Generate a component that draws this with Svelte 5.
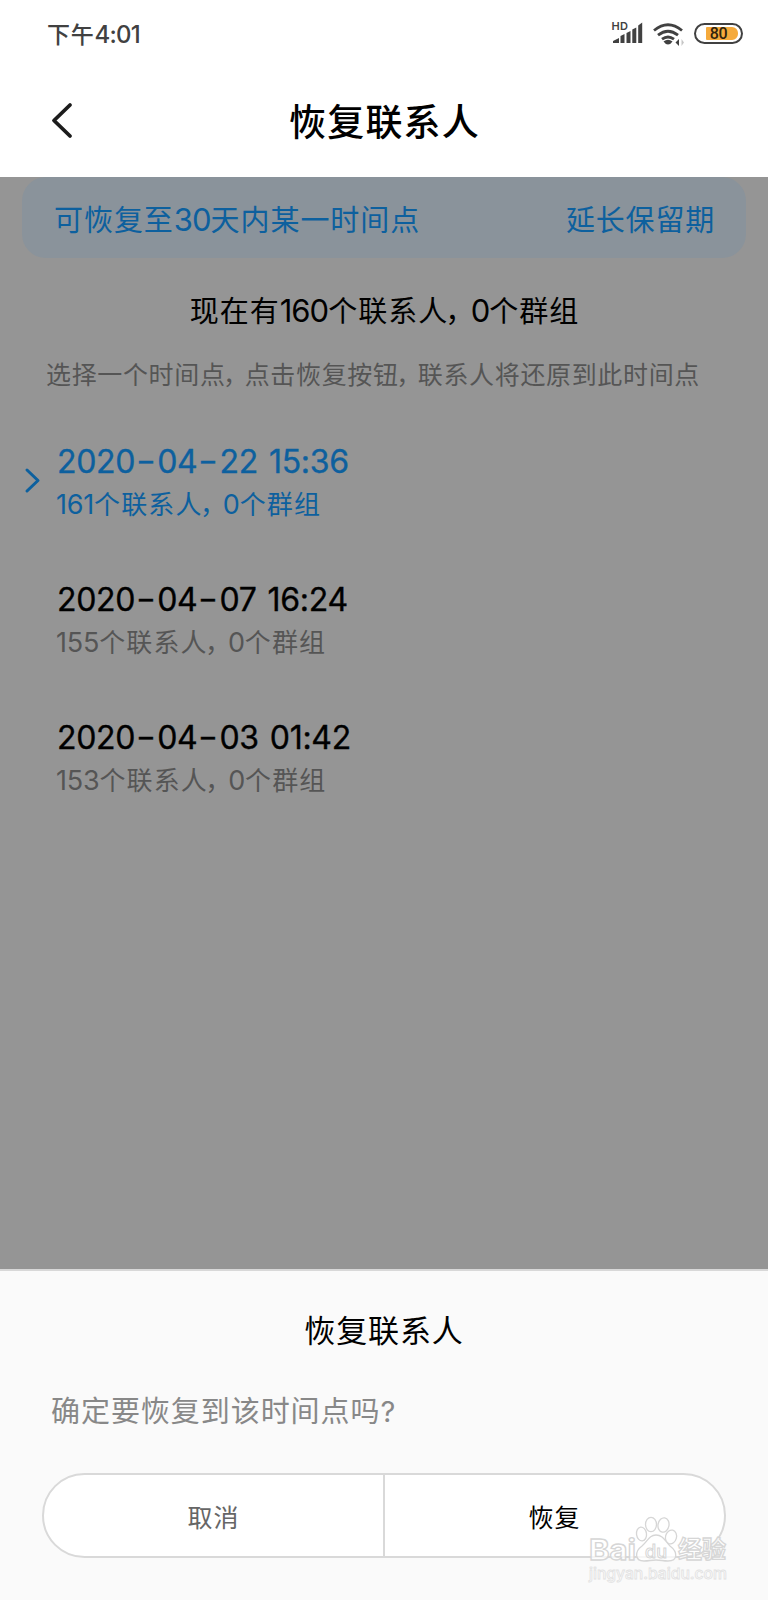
<script>
const points = [
	{ time: '2020-04-22 15:36', detail: '161个联系人，0个群组', active: true },
	{ time: '2020-04-07 16:24', detail: '155个联系人，0个群组' },
	{ time: '2020-04-03 01:42', detail: '153个联系人，0个群组' },
];

// digits, full-width commas and hanzi are spaced differently
const split = (text) => text.match(/[0-9:?]+|，|-|\s|[^0-9:?，\-\s]+/g).map((value) => ({
	value,
	kind: /[0-9:?]/.test(value) ? 'num' : value === '，' ? 'comma' : value === '-' ? 'dash' : 'han',
}));
</script>

{#snippet mixed(text)}{#each split(text) as run}<span class={ run.kind }>{ run.value }</span>{/each}{/snippet}

<main>
	<header>
		<div class="status">
			<div class="clock">{@render mixed('下午4:01')}</div>

			<svg class="indicators" width="136" height="34" viewBox="0 0 136 34">
				<g fill="#414141">
					<text x="-.5" y="13.500" font-size="11" font-weight="600" textLength="16.500">HD</text>
					<path d="M1 27v-2l6-3v5zM8.500 27v-7l4-2v9zM14.500 27v-10l4-2v12zM20.300 27v-13.500l4-2v15.500zM26.200 27v-17.500l4-3v20.500z" />
					<path d="M51.500 25.500q4.500-3.500 9 0q-1.500 2.500-4.500 3q-3-.5-4.500-3z" />
					<path d="M63.500 26.500l3.500-3.500v7z" />
					<path d="M69.500 23l2.500 3.500l-2.500 3.500z" opacity=".3" />
				</g>
				<g fill="none" stroke="#414141" stroke-width="2.800">
					<path d="M42 14.500q14-11.500 28 0M46 19.200q10-8 20 0M50 23.200q6-4.500 12 0" />
				</g>
			</svg>
		</div>

		<div class="bar">
			<svg class="back" width="24" height="38" viewBox="0 0 24 38">
				<path d="M20 4L4 19.500L20 35" fill="none" stroke="#1c1c1c" stroke-width="3.800" stroke-linecap="round" stroke-linejoin="round" />
			</svg>
			<h1>恢复联系人</h1>
		</div>
	</header>

	<div class="page">
		<div class="banner">
			<div>{@render mixed('可恢复至30天内某一时间点')}</div>
			<div class="extend">延长保留期</div>
		</div>

		<h2>{@render mixed('现在有160个联系人，0个群组')}</h2>
		<p class="hint">{@render mixed('选择一个时间点，点击恢复按钮，联系人将还原到此时间点')}</p>

		<ul>
			{#each points as point}
				<li class:active={ point.active }>
					<div class="mark">
						{#if point.active}
							<svg width="18" height="28" viewBox="0 0 18 28">
								<path d="M3 3L14 13.500L3 24" fill="none" stroke="currentColor" stroke-width="3" stroke-linecap="round" stroke-linejoin="round" />
							</svg>
						{/if}
					</div>
					<div>
						<div class="time">{@render mixed(point.time)}</div>
						<div class="detail">{@render mixed(point.detail)}</div>
					</div>
				</li>
			{/each}
		</ul>
	</div>

	<section class="sheet">
		<h3>恢复联系人</h3>
		<p>{@render mixed('确定要恢复到该时间点吗?')}</p>
		<div class="actions">
			<button class="cancel">取消</button>
			<button>恢复</button>
		</div>
	</section>

	<svg class="watermark" width="150" height="76" viewBox="0 0 150 76">
		<g fill="#fff" fill-opacity=".75" stroke="#d6d6d6" stroke-width="1.300">
			<text x="5" y="48" font-size="29" font-weight="700" textLength="47" lengthAdjust="spacingAndGlyphs">Bai</text>
			<ellipse cx="57.500" cy="22" rx="5" ry="7" transform="rotate(-8 57.500 22)" />
			<ellipse cx="67" cy="12.500" rx="5.500" ry="7.200" />
			<ellipse cx="79.500" cy="13" rx="5.500" ry="7.200" transform="rotate(10 79.500 13)" />
			<ellipse cx="87" cy="25" rx="5.500" ry="7" transform="rotate(15 87 25)" />
			<path d="M72 23c7 0 9 6 14 11c8 6 8 15-2 15c-5 0-7-1-12-1s-7 1-12 1c-10 0-9-10-2-15c6-5 7-11 14-11z" />
			<text x="61" y="46" font-size="18" font-weight="500" stroke-width="1">du</text>
			<text x="94" y="46" font-size="24" font-weight="700">经验</text>
			<text x="5" y="67" font-size="15" font-weight="500" textLength="138" lengthAdjust="spacingAndGlyphs" stroke-width=".8" stroke="#e2e2e2">jingyan.baidu.com</text>
		</g>
	</svg>

	<div class="battery"><span>80</span></div>
</main>

<style>
:global(body) {
	margin: 0;
}

main {
	--blue: #0d609e;
	--line: #d9d9d9;

	position: relative;
	display: flex;
	flex-direction: column;
	width: 768px;
	height: 1600px;
	overflow: hidden;

	background: #959595;
	color: #000;
	font-family: Inter, "Noto Sans CJK SC", sans-serif;
}

h1, h2, h3, p, ul {
	margin: 0;
	padding: 0;
	font-weight: 400;
}

.num {
	letter-spacing: 0;
}

.comma {
	margin: 0 .34em 0 -.1em;
	font-feature-settings: "halt";
}

header {
	height: 177px;
	background: #fff;
}

.status {
	display: flex;
	justify-content: space-between;
	height: 68px;
	padding: 0 20px 0 47px;

	.clock {
		color: #414141;
		font-size: 23px;
		font-weight: 500;
		line-height: 69px;
		letter-spacing: .8px;

		.num {
			font-size: 24px;
			letter-spacing: -.8px;
		}
	}

	.indicators {
		margin: 16px 0 0;
		overflow: visible;
	}
}

.battery {
	position: absolute;
	top: 23px;
	left: 694px;
	box-sizing: border-box;
	width: 49px;
	height: 21px;
	padding: 2px 3px;
	border: 2px solid #414141;
	border-radius: 11px;

	span {
		display: block;
		height: 13px;
		margin-left: 7px;
		padding-right: 7px;
		border-radius: 1px 6px 6px 1px;
		background: #f5aa3c;

		color: #2f220e;
		font: 500 16px/14px Roboto, sans-serif;
		letter-spacing: -.3px;
		text-align: center;
	}
}

.bar {
	display: flex;
	align-items: center;
	height: 105px;
	padding: 0 50px;

	.back {
		margin-top: -1px;
	}

	h1 {
		flex: 1;
		margin: -2px 23px 0 0;
		font-size: 37px;
		font-weight: 500;
		letter-spacing: 1.2px;
		text-align: center;
	}
}

.page {
	flex: 1;
}

.banner {
	display: flex;
	justify-content: space-between;
	height: 81px;
	margin: 0 22px;
	padding: 0 31px 0 32px;
	border-radius: 24px;
	background: #8a939b;

	color: var(--blue);
	font-size: 29px;
	line-height: 85px;
	letter-spacing: .95px;

	.num {
		font-size: 31px;
		letter-spacing: -1px;
	}

	.extend {
		line-height: 87px;
		letter-spacing: .8px;
	}
}

h2 {
	margin-top: 28px;
	padding-left: 1px;
	font-size: 29px;
	line-height: 50px;
	letter-spacing: 1px;
	text-align: center;

	.num {
		font-size: 31px;
		letter-spacing: -1px;
	}
}

.hint {
	margin-top: 14px;
	padding-left: 46px;
	color: #555;
	font-size: 25px;
	line-height: 48px;
	letter-spacing: .65px;
	white-space: nowrap;
}

ul {
	margin-top: 39px;
	list-style: none;
}

li {
	display: flex;
	height: 138px;

	.mark {
		width: 33px;
		padding: 29px 0 0 24px;
	}

	.time {
		font-size: 32px;
		font-weight: 400;
		line-height: 48px;
		white-space: pre;
		-webkit-text-stroke: .35px currentColor;

		.num {
			letter-spacing: -.3px;
		}

		.han {
			letter-spacing: 2px;
		}
	}

	.dash {
		display: inline-block;
		width: 22px;
		transform: translateY(-1px) scaleX(1.35);
		text-align: center;
	}

	.detail {
		margin-left: -1px;
		color: #555;
		font-size: 26px;
		line-height: 38px;
		letter-spacing: 1.1px;

		.num {
			font-size: 27px;
			letter-spacing: -.2px;
		}
	}

	&.active, &.active .detail {
		color: var(--blue);
	}
}

.sheet {
	box-sizing: border-box;
	height: 331px;
	padding: 36px 42px 0;
	border-top: 2px solid #d8d8d8;
	background: #fafafa;

	h3 {
		font-size: 31px;
		line-height: 48px;
		letter-spacing: .9px;
		text-align: center;
	}

	p {
		margin: 33px 0 37px 9px;
		color: #888;
		font-size: 29px;
		line-height: 48px;
		letter-spacing: .95px;
	}
}

.actions {
	display: flex;
	box-sizing: border-box;
	height: 85px;
	border: 2px solid var(--line);
	border-radius: 43px;
	background: #fff;
	overflow: hidden;

	button {
		flex: 1;
		padding: 1px 0 0;
		border: 0;
		background: none;

		color: #000;
		font: inherit;
		font-size: 25px;
		letter-spacing: .9px;
	}

	.cancel {
		border-right: 2px solid var(--line);
		color: #666;
	}
}

.watermark {
	position: absolute;
	left: 584px;
	top: 1512px;
}
</style>
